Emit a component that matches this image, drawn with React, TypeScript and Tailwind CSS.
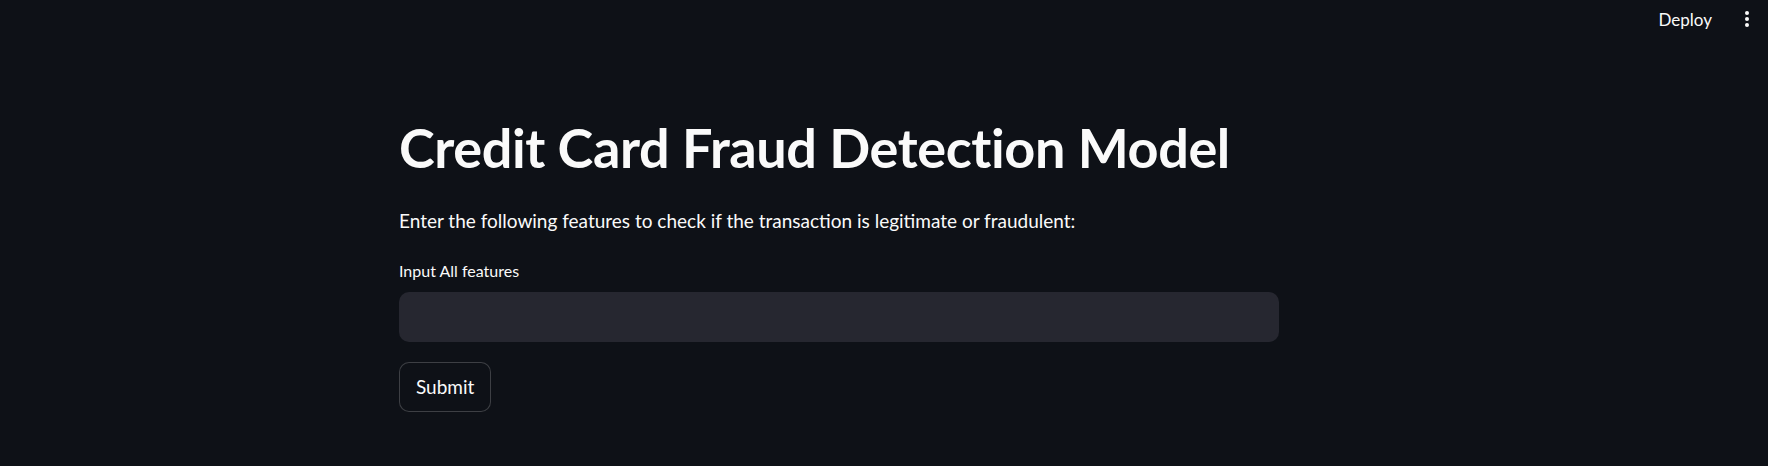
export default function App() {
  return (
    <div className="h-[466px] overflow-hidden bg-[#0e1117] text-[#fafafa] font-['Lato',sans-serif]">
      <header className="flex justify-end items-center h-[38px] pr-[11px]">
        <button className="text-[17px] leading-none px-[12px] py-[8px] text-[#fafafa]">Deploy</button>
        <svg width="20" height="20" viewBox="0 0 20 20" className="ml-[13px]" fill="#fafafa">
          <circle cx="10" cy="4" r="2" />
          <circle cx="10" cy="10" r="2" />
          <circle cx="10" cy="16" r="2" />
        </svg>
      </header>

      <main className="w-[880px] ml-[399px] pt-[78px]">
        <h1 className="text-[54px] font-bold leading-[1.2] tracking-[-0.4px]">Credit Card Fraud Detection Model</h1>
        <p className="mt-[25px] text-[19px] leading-[1.6]">
          Enter the following features to check if the transaction is legitimate or fraudulent:
        </p>

        <label className="block mt-[22px] text-[16px] leading-[1.6]">Input All features</label>
        <input
          type="text"
          className="block mt-[8px] w-[880px] h-[50px] rounded-[10px] bg-[#262730] px-[16px] text-[18px] outline-none"
        />

        <button className="mt-[20px] h-[50px] px-[16px] rounded-[10px] border border-[#fafafa33] text-[19px] bg-[#0e1117]">
          Submit
        </button>
      </main>
    </div>
  );
}
